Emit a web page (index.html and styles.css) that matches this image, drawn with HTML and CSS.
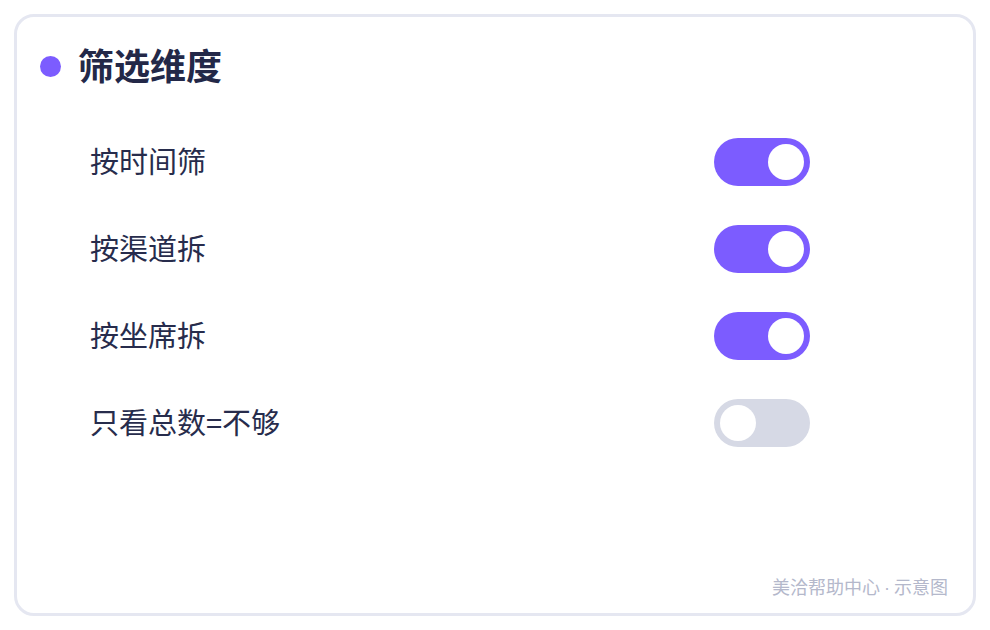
FILE: index.html
```html
<!DOCTYPE html>
<html lang="zh-CN">
<head>
    <meta charset="UTF-8">
    <title>筛选维度</title>
    <link rel="stylesheet" href="styles.css">
</head>
<body>
    <div class="card">
        <div class="card-header">
            <span class="dot"></span>
            <h1>筛选维度</h1>
        </div>

        <ul class="options">
            <li class="option">
                <span class="label">按时间筛</span>
                <span class="switch on"><span class="knob"></span></span>
            </li>
            <li class="option">
                <span class="label">按渠道拆</span>
                <span class="switch on"><span class="knob"></span></span>
            </li>
            <li class="option">
                <span class="label">按坐席拆</span>
                <span class="switch on"><span class="knob"></span></span>
            </li>
            <li class="option">
                <span class="label">只看总数=不够</span>
                <span class="switch"><span class="knob"></span></span>
            </li>
        </ul>

        <div class="footer">美洽帮助中心<span class="sep">·</span>示意图</div>
    </div>
</body>
</html>
```

FILE: styles.css
```css
body {
    margin: 0;
    padding: 14px;
    background: #fff;
    font-family: "Noto Sans CJK SC", "Noto Sans", sans-serif;
}
.card {
    box-sizing: border-box;
    width: 962px;
    height: 602px;
    border: 3px solid #e5e7f1;
    border-radius: 20px;
    background: #fff;
    padding: 28px 25px 13px 23px;
    display: flex;
    flex-direction: column;
}
.card-header {
    display: flex;
    align-items: center;
    height: 42px;
}
.dot {
    width: 21px;
    height: 21px;
    border-radius: 50%;
    background: #7c5cff;
    margin-right: 17px;
}
h1 {
    margin: 0;
    padding-bottom: 5px;
    font-size: 36px;
    line-height: 42px;
    font-weight: 700;
    color: #232848;
}
.options {
    list-style: none;
    margin: 31px 0 0 50px;
    padding: 0;
    width: 720px;
}
.option {
    height: 87px;
    display: flex;
    align-items: center;
    justify-content: space-between;
}
.label {
    font-size: 29px;
    line-height: 36px;
    padding-bottom: 3px;
    color: #272c4c;
}
.switch {
    box-sizing: border-box;
    width: 96px;
    height: 48px;
    border-radius: 24px;
    background: #d6d9e5;
    padding: 6px;
    display: flex;
}
.switch.on {
    background: #7c5cff;
    justify-content: flex-end;
}
.knob {
    width: 36px;
    height: 36px;
    border-radius: 50%;
    background: #fff;
}
.footer {
    margin-top: auto;
    text-align: right;
    font-size: 18px;
    line-height: 24px;
    color: #b4b8cb;
}
.sep {
    font-family: "Liberation Sans", sans-serif;
    margin: 0 4px;
}
```
